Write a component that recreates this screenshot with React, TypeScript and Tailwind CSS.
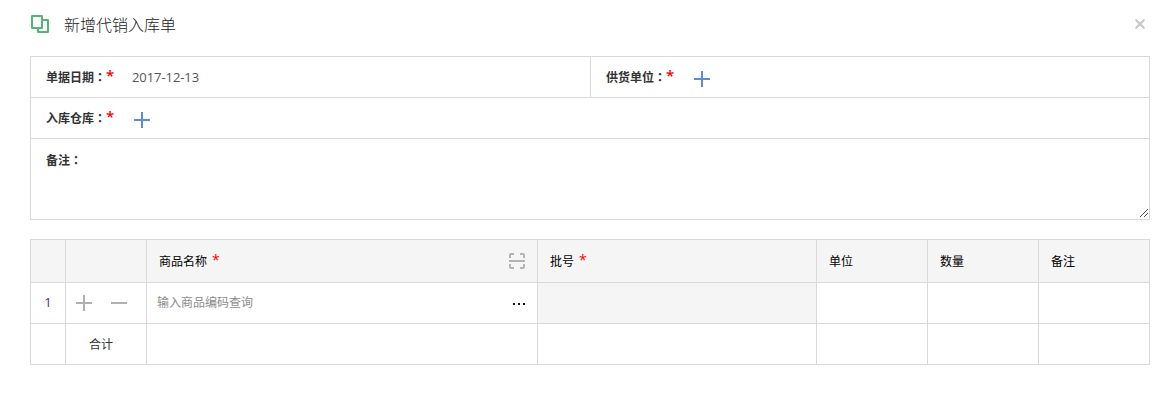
import React from "react";

const line = "border-[#d9d9d9]";

function Label({ text, required }: { text: string; required?: boolean }) {
  return (
    <div className="flex h-4 shrink-0 text-[12px] leading-4 font-semibold text-[#333]">
      <span>{text}</span>
      <span className="w-3 font-['Noto_Sans_CJK_TC',sans-serif]">：</span>
      {required && (
        <span className="w-2 font-['Open_Sans',sans-serif] text-[15px] leading-[13px] font-semibold text-[#f00000]">*</span>
      )}
    </div>
  );
}

function BluePlus() {
  return (
    <svg width="16" height="16" viewBox="0 0 16 16" className="mt-[3px] shrink-0" fill="#5b8be0">
      <path d="M0 7h16v2H0zM7 0h2v16H7z" />
    </svg>
  );
}

function Heading({ text, required }: { text: string; required?: boolean }) {
  return (
    <div className="flex h-4 text-[12px] leading-4 text-black">
      <span>{text}</span>
      {required && (
        <span className="ml-[5px] font-['Open_Sans',sans-serif] text-[14px] leading-[13px] text-[#ff0000]">*</span>
      )}
    </div>
  );
}

function Cell({ className = "", children }: { className?: string; children?: React.ReactNode }) {
  return <div className={`flex items-center border-r border-b ${line} ${className}`}>{children}</div>;
}

export default function App() {
  return (
    <div className="h-[412px] w-[1172px] overflow-hidden bg-white font-['Noto_Sans_CJK_SC',sans-serif]">
      <header className="flex h-14 items-start pt-[14px] pr-[27px] pl-[30px]">
        <svg width="20" height="20" viewBox="0 0 20 20" fill="none" stroke="#4fb873" strokeWidth="2" strokeLinejoin="round">
          <path d="M2 2h10v12H2zM12.500 6H18v12H8v-3.500" />
        </svg>
        <h1 className="ml-[14px] text-[16px] leading-[20px] font-light text-[#222]">新增代销入库单</h1>
        <svg className="mt-[5px] ml-auto" width="10" height="10" viewBox="0 0 10 10" stroke="#c8c8c8" strokeWidth="2.200">
          <path d="M.5.5l9 9M9.500.5l-9 9" />
        </svg>
      </header>

      <section className={`mx-[30px] w-[1120px] border ${line}`}>
        <div className={`flex h-[41px] border-b ${line}`}>
          <div className={`flex w-[560px] items-center border-r pl-[15px] ${line}`}>
            <Label text="单据日期" required />
            <span className="ml-[18px] font-['Open_Sans',sans-serif] text-[13px] leading-4 tracking-[-0.080px] text-[#555]">2017-12-13</span>
          </div>
          <div className="flex items-center gap-5 pl-[15px]">
            <Label text="供货单位" required />
            <BluePlus />
          </div>
        </div>
        <div className={`flex h-[41px] items-center gap-5 border-b pl-[15px] ${line}`}>
          <Label text="入库仓库" required />
          <BluePlus />
        </div>
        <div className="flex h-20 items-start justify-between pt-[13px] pl-[15px]">
          <Label text="备注" />
          <svg className="mr-px mb-px self-end" width="9" height="9" viewBox="0 0 9 9" fill="#555">
            <path d="M8 0h1v1H8zM7 1h1v1H7zM6 2h1v1H6zM5 3h1v1H5zM4 4h1v1H4zM3 5h1v1H3zM2 6h1v1H2zM1 7h1v1H1zM8 4h1v1H8zM7 5h1v1H7zM6 6h1v1H6zM5 7h1v1H5z" />
          </svg>
        </div>
      </section>

      <section className={`mx-[30px] mt-[19px] grid w-[1120px] grid-cols-[35px_81px_391px_279px_111px_111px_111px] grid-rows-[43px_41px_41px] border-t border-l ${line}`}>
        <Cell className="bg-[#f5f5f5]" />
        <Cell className="bg-[#f5f5f5]" />
        <Cell className="justify-between bg-[#f5f5f5] pr-3 pl-3">
          <Heading text="商品名称" required />
          <svg width="16" height="16" viewBox="0 0 16 16" fill="none" stroke="#b3b3b3" strokeWidth="2">
            <path d="M1 5V2q0-1 1-1h3M11 1h3q1 0 1 1v3M1 11v3q0 1 1 1h3M11 15h3q1 0 1-1v-3M0 8h16" />
          </svg>
        </Cell>
        <Cell className="bg-[#f5f5f5] pl-3"><Heading text="批号" required /></Cell>
        <Cell className="bg-[#f5f5f5] pl-3"><Heading text="单位" /></Cell>
        <Cell className="bg-[#f5f5f5] pl-3"><Heading text="数量" /></Cell>
        <Cell className="bg-[#f5f5f5] pl-3"><Heading text="备注" /></Cell>

        <Cell className="justify-center font-['Open_Sans',sans-serif] text-[13px] text-[#4b2e83]">1</Cell>
        <Cell className="gap-[19px] pl-[10px]">
          <svg width="16" height="16" viewBox="0 0 16 16" fill="#b0b0b0">
            <path d="M0 7h16v2H0zM7 0h2v16H7z" />
          </svg>
          <svg width="16" height="16" viewBox="0 0 16 16" fill="#b0b0b0">
            <path d="M0 7h16v2H0z" />
          </svg>
        </Cell>
        <Cell className="justify-between pr-[11px] pl-[10px]">
          <span className="pb-[3px] text-[12px] leading-4 text-[#8c8c8c]">输入商品编码查询</span>
          <svg className="mt-0.5" width="14" height="4" viewBox="0 0 14 4" fill="#111">
            <path d="M1 1h2v2H1zM6 1h2v2H6zM11 1h2v2h-2z" />
          </svg>
        </Cell>
        <Cell className="bg-[#f5f5f5]" />
        <Cell />
        <Cell />
        <Cell />

        <Cell />
        <Cell className="pl-[23px] text-[12px] text-[#333]">合计</Cell>
        <Cell />
        <Cell />
        <Cell />
        <Cell />
        <Cell />
      </section>
    </div>
  );
}
